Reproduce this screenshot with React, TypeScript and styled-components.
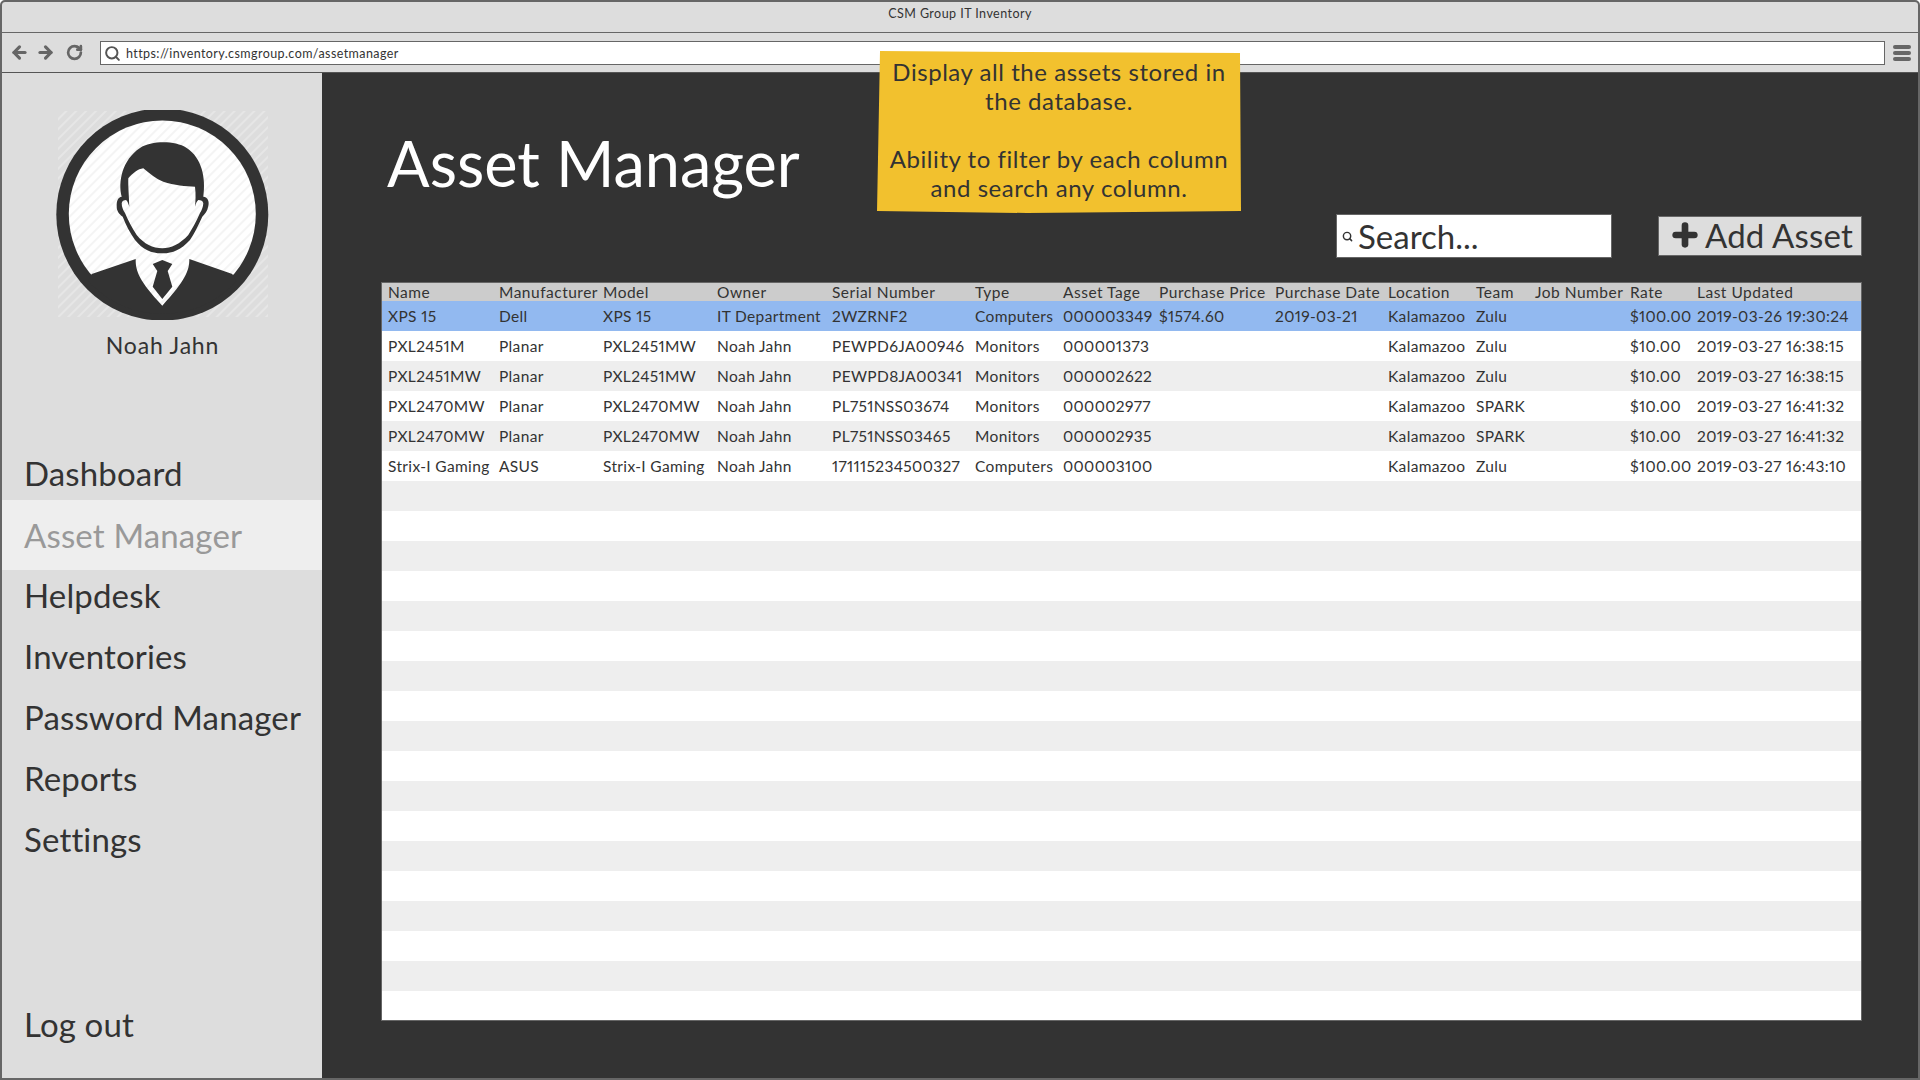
import React from "react";
import styled, { createGlobalStyle } from "styled-components";
import { ArrowLeft, ArrowRight, RotateCw, Search as SearchIcon, Plus } from "lucide-react";

const Global = createGlobalStyle`
  html, body { margin: 0; padding: 0; height: 100%; overflow: hidden; }
  body { font-family: "Lato", "Noto Sans", sans-serif; color: #333; }
  * { box-sizing: border-box; }
`;

const Frame = styled.div`
  width: 1920px; height: 1080px; display: flex; flex-direction: column;
  border: 2px solid #666; border-radius: 5px 5px 0 0; background: #333; overflow: hidden;
`;
const TitleBar = styled.div`
  height: 31px; flex: none; background: #ddd; border-bottom: 1px solid #666;
  display: flex; align-items: center; justify-content: center;
  font-size: 12.5px; letter-spacing: 0.45px; padding-bottom: 8px; color: #333;
`;
const AddressBar = styled.div`
  height: 40px; flex: none; background: #ddd; border-bottom: 1px solid #555;
  display: flex; align-items: center; padding: 0 7px 0 8px; color: #666;
`;
const NavIcons = styled.div`
  display: flex; align-items: center; gap: 7px; width: 90px; flex: none;
`;
const UrlField = styled.div`
  flex: 1; height: 24px; margin-top: 1px; background: #fff; border: 1px solid #666;
  display: flex; align-items: center; gap: 5px; padding-left: 3px;
  font-size: 12.5px; letter-spacing: 0.42px; color: #333;
`;
const Burger = styled.div`
  width: 18px; margin-left: 8px; flex: none; display: flex; flex-direction: column; gap: 2px;
`;
const BurgerBar = styled.span`
  display: block; height: 4px; border-radius: 2px; background: #666;
`;
const Body = styled.div`
  flex: 1; display: flex; min-height: 0;
`;
const Sidebar = styled.aside`
  width: 320px; flex: none; background: #ddd; display: flex; flex-direction: column;
  padding-bottom: 24px;
`;
const Profile = styled.div`
  padding: 37px 0 0 1px; display: flex; flex-direction: column; align-items: center; height: 369px;
`;
const UserName = styled.div`
  font-size: 23px; letter-spacing: 0.8px; line-height: 28px; margin-top: 11px;
`;
const NavItem = styled.div<{ $active?: boolean }>`
  height: ${p => (p.$active ? 70 : 61)}px;
  margin: ${p => (p.$active ? "-3px 0 -6px" : "0")};
  padding-left: 22px; display: flex; align-items: center;
  font-size: 33px; letter-spacing: 0.15px;
  background: ${p => (p.$active ? "#eee" : "transparent")};
  color: ${p => (p.$active ? "#999" : "#333")};
`;
const Spacer = styled.div` flex: 1; `;
const Main = styled.main`
  flex: 1; position: relative; padding: 50px 56px 0 59px; min-width: 0;
`;
const Heading = styled.h1`
  margin: 0 0 11px 6px; font-size: 63px; line-height: 80px; font-weight: 400; color: #fff;
`;
const Sticky = styled.div`
  position: absolute; left: 555px; top: -22px; width: 364px; height: 162px;
  background: #f2c12e; color: #333; font-size: 24px; line-height: 29px; text-align: center;
  letter-spacing: 0.55px; padding-top: 6px; white-space: pre-line;
  clip-path: polygon(3px 0, 150px 1px, 363px 2px, 364px 160px, 150px 162px, 0 160px);
`;
const Tools = styled.div`
  display: flex; justify-content: flex-end; align-items: center; gap: 46px; height: 44px; margin-bottom: 24px;
`;
const SearchBox = styled.div`
  width: 276px; height: 44px; background: #fff; border: 1px solid #666;
  display: flex; align-items: center; gap: 5px; padding-left: 5px;
  font-size: 33px; color: #333;
`;
const AddButton = styled.div`
  width: 204px; height: 40px; background: #ddd; border: 1px solid #666;
  display: flex; align-items: center; gap: 4px; padding: 0 0 2px 10px;
  font-size: 33px; letter-spacing: 0.2px; color: #333;
`;
const Table = styled.div`
  height: 739px; background: #fff; border: 1px solid #666; overflow: hidden;
`;
const COLS = "111px 104px 114px 115px 143px 88px 96px 116px 113px 88px 59px 95px 67px 165px";
const HeadRow = styled.div`
  display: grid; grid-template-columns: ${COLS}; height: 18px; background: #ccc;
  font-size: 15.5px; line-height: 18px; letter-spacing: 0.5px;
`;
const Row = styled.div<{ $tone: "sel" | "odd" | "even" }>`
  display: grid; grid-template-columns: ${COLS}; height: 30px; align-items: center;
  font-size: 15.5px; letter-spacing: 0.35px; font-variant-numeric: proportional-nums;
  background: ${p => (p.$tone === "sel" ? "#92b9f0" : p.$tone === "even" ? "#eee" : "#fff")};
`;
const Cell = styled.div`
  white-space: nowrap; padding-left: 6px;
`;
const Tail = styled.span` display: contents; `;

const HEAD = ["Name","Manufacturer","Model","Owner","Serial Number","Type","Asset Tage","Purchase Price","Purchase Date","Location","Team","Job Number","Rate","Last Updated"];
const DATA = [
  ["XPS 15","Dell","XPS 15","IT Department","2WZRNF2","Computers","000003349","$1574.60","2019-03-21","Kalamazoo","Zulu","","$100.00","2019-03-26 19:30:24"],
  ["PXL2451M","Planar","PXL2451MW","Noah Jahn","PEWPD6JA00946","Monitors","000001373","","","Kalamazoo","Zulu","","$10.00","2019-03-27 16:38:15"],
  ["PXL2451MW","Planar","PXL2451MW","Noah Jahn","PEWPD8JA00341","Monitors","000002622","","","Kalamazoo","Zulu","","$10.00","2019-03-27 16:38:15"],
  ["PXL2470MW","Planar","PXL2470MW","Noah Jahn","PL751NSS03674","Monitors","000002977","","","Kalamazoo","SPARK","","$10.00","2019-03-27 16:41:32"],
  ["PXL2470MW","Planar","PXL2470MW","Noah Jahn","PL751NSS03465","Monitors","000002935","","","Kalamazoo","SPARK","","$10.00","2019-03-27 16:41:32"],
  ["Strix-I Gaming","ASUS","Strix-I Gaming","Noah Jahn","171115234500327","Computers","000003100","","","Kalamazoo","Zulu","","$100.00","2019-03-27 16:43:10"],
];
const NAV = ["Dashboard","Asset Manager","Helpdesk","Inventories","Password Manager","Reports","Settings"];

const Avatar = () => (
  <svg width="214" height="210" viewBox="0 0 214 210">
    <defs>
      <pattern id="h" width="7" height="7" patternUnits="userSpaceOnUse" patternTransform="rotate(45)">
        <rect width="7" height="7" fill="#ddd" />
        <rect width="2" height="7" fill="#e6e6e6" />
      </pattern>
      <pattern id="w" width="7" height="7" patternUnits="userSpaceOnUse" patternTransform="rotate(45)">
        <rect width="7" height="7" fill="#fff" />
        <rect width="2" height="7" fill="#f4f4f4" />
      </pattern>
      <clipPath id="c"><circle cx="106.3" cy="104" r="100" /></clipPath>
    </defs>
    <rect x="2" y="1" width="210" height="206" fill="url(#h)" />
    <circle cx="106.3" cy="104.5" r="106" fill="#333" />
    <circle cx="106.3" cy="104" r="93.5" fill="url(#w)" />
    <path clipPath="url(#c)" d="M35.7 164 L79.7 149 C79.5 160 82 170 106.3 195.7 C130 170 133.5 160 133.3 149 L176.3 164 L200 210 L12 210 Z" fill="#333" />
    <path d="M96.7 154 L106.3 150 L116.3 154 L111.7 161 L116.3 176.7 L106.3 189 L96.7 176.7 L101.3 161 Z" fill="#333" />
    <path d="M65.7 86.7 C62 72 66 50 84 38 C95 31 118 30 130.7 38 C146 48 150 68 147.3 86.7 C152 87 153.5 92 152.3 96 C151.5 101 149 104 146.3 106.7 C142 116 138 124 134 130 C125 140 116 143.5 106.3 143.3 C96 143.5 87 140 79 130 C74 123 70 115 66.7 106.7 C63 104 60.5 101 60.7 96 C60.5 91 62 87 65.7 86.7 Z" fill="#333" />
    <path d="M72.3 68.3 C77 63 82 59 87.3 58.3 C94 64 100 69 107.3 71.7 C118 75 130 76.5 139 76.7 C140 85 139.5 91 139 96.7 C140 93 141 91 142.3 90 C145 90 147 91 147.3 93.3 C147 97 146 100 144 103 C140 112 136 119 132.3 125 C124 134 115 138.3 106.3 138.3 C97 138.3 88 134 80.7 125 C76 118 72 110 69 103 C67 100 65.7 97 65.7 93.3 C66 91 68 90 70 90 C71.5 91 72.5 94 73.3 96.7 C73 85 72 76 72.3 68.3 Z" fill="url(#w)" />
  </svg>
);

export default function App() {
  return (
    <>
      <Global />
      <Frame>
        <TitleBar>CSM Group IT Inventory</TitleBar>
        <AddressBar>
          <NavIcons>
            <ArrowLeft size={19} strokeWidth={4} />
            <ArrowRight size={19} strokeWidth={4} />
            <RotateCw size={17} strokeWidth={3.8} style={{ marginLeft: 4 }} />
          </NavIcons>
          <UrlField>
            <SearchIcon size={17} strokeWidth={2.8} color="#555" />
            https://inventory.csmgroup.com/assetmanager
          </UrlField>
          <Burger><BurgerBar /><BurgerBar /><BurgerBar /></Burger>
        </AddressBar>
        <Body>
          <Sidebar>
            <Profile>
              <Avatar />
              <UserName>Noah Jahn</UserName>
            </Profile>
            {NAV.map(n => <NavItem key={n} $active={n === "Asset Manager"}>{n}</NavItem>)}
            <Spacer />
            <NavItem>Log out</NavItem>
          </Sidebar>
          <Main>
            <Heading>Asset Manager</Heading>
            <Sticky>{"Display all the assets stored in\nthe database.\n\nAbility to filter by each column\nand search any column."}</Sticky>
            <Tools>
              <SearchBox><SearchIcon size={11} strokeWidth={3.2} />Search...</SearchBox>
              <AddButton><Plus size={32} strokeWidth={5} />Add Asset</AddButton>
            </Tools>
            <Table>
              <HeadRow>{HEAD.map(h => <Cell key={h}>{h}</Cell>)}</HeadRow>
              {Array.from({ length: 24 }).map((_, i) => (
                <Row key={i} $tone={i === 0 ? "sel" : i % 2 === 0 ? "even" : "odd"}>
                  {DATA[i] ? DATA[i].map((c, j) => <Cell key={j}>{c}</Cell>) : <Tail />}
                </Row>
              ))}
            </Table>
          </Main>
        </Body>
      </Frame>
    </>
  );
}
